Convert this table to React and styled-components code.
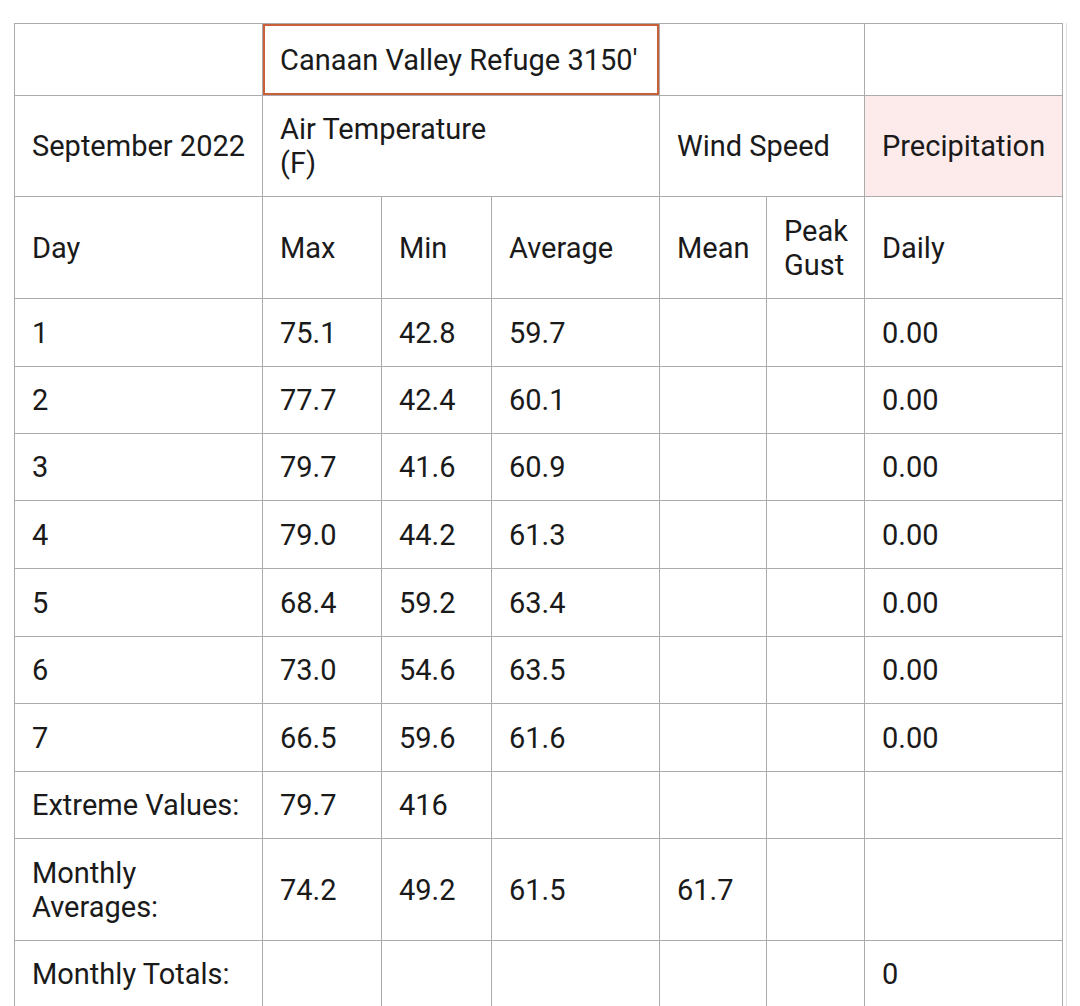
import React from "react";
import styled, { createGlobalStyle } from "styled-components";

const Global = createGlobalStyle`
  html, body { margin: 0; padding: 0; background: #fff; }
  body { font-family: Roboto, "Noto Sans", "Liberation Sans", sans-serif; color: #1a1a1a; overflow: hidden; }
`;

const Page = styled.div`
  padding: 23px 0 0 14px;
`;

const Frame = styled.div`
  display: inline-block;
  border-right: 1px solid #e2e2e2;
  padding-right: 3px;
`;

const Table = styled.table`
  border-collapse: collapse;
  table-layout: fixed;
  width: 1049px;
  font-size: 29px;
  line-height: 34px;
`;

const Row = styled.tr`
  height: ${(p) => p.$h}px;
`;

const Cell = styled.td`
  border: 1px solid #ababab;
  padding: 0 8px 0 17px;
  vertical-align: middle;
  text-align: left;
  font-weight: 400;
  background: ${(p) => (p.$pink ? "#fdebeb" : "#fff")};
  box-shadow: ${(p) => (p.$boxed ? "inset 0 0 0 2px #c9603a" : "none")};
  white-space: normal;
  overflow: hidden;
`;

const cols = [248, 119, 110, 168, 107, 98, 198];

const data = [
  ["1", "75.1", "42.8", "59.7", "", "", "0.00"],
  ["2", "77.7", "42.4", "60.1", "", "", "0.00"],
  ["3", "79.7", "41.6", "60.9", "", "", "0.00"],
  ["4", "79.0", "44.2", "61.3", "", "", "0.00"],
  ["5", "68.4", "59.2", "63.4", "", "", "0.00"],
  ["6", "73.0", "54.6", "63.5", "", "", "0.00"],
  ["7", "66.5", "59.6", "61.6", "", "", "0.00"],
];
const heights = [68, 67, 67, 68, 68, 67, 68];

export default function App() {
  return (
    <>
      <Global />
      <Page>
        <Frame>
          <Table>
            <colgroup>
              {cols.map((w, i) => (
                <col key={i} style={{ width: w }} />
              ))}
            </colgroup>
            <tbody>
              <Row $h={72}>
                <Cell />
                <Cell colSpan={3} $boxed>
                  Canaan Valley Refuge 3150'
                </Cell>
                <Cell colSpan={2} />
                <Cell />
              </Row>
              <Row $h={101}>
                <Cell>September 2022</Cell>
                <Cell colSpan={3}>
                  Air Temperature
                  <br />
                  (F)
                </Cell>
                <Cell colSpan={2}>Wind Speed</Cell>
                <Cell $pink>Precipitation</Cell>
              </Row>
              <Row $h={102}>
                <Cell>Day</Cell>
                <Cell>Max</Cell>
                <Cell>Min</Cell>
                <Cell>Average</Cell>
                <Cell>Mean</Cell>
                <Cell>Peak Gust</Cell>
                <Cell>Daily</Cell>
              </Row>
              {data.map((r, i) => (
                <Row key={i} $h={heights[i]}>
                  {r.map((c, j) => (
                    <Cell key={j}>{c}</Cell>
                  ))}
                </Row>
              ))}
              <Row $h={67}>
                <Cell>Extreme Values:</Cell>
                <Cell>79.7</Cell>
                <Cell>416</Cell>
                <Cell />
                <Cell />
                <Cell />
                <Cell />
              </Row>
              <Row $h={102}>
                <Cell>
                  Monthly
                  <br />
                  Averages:
                </Cell>
                <Cell>74.2</Cell>
                <Cell>49.2</Cell>
                <Cell>61.5</Cell>
                <Cell>61.7</Cell>
                <Cell />
                <Cell />
              </Row>
              <Row $h={67}>
                <Cell>Monthly Totals:</Cell>
                <Cell />
                <Cell />
                <Cell />
                <Cell />
                <Cell />
                <Cell>0</Cell>
              </Row>
            </tbody>
          </Table>
        </Frame>
      </Page>
    </>
  );
}
